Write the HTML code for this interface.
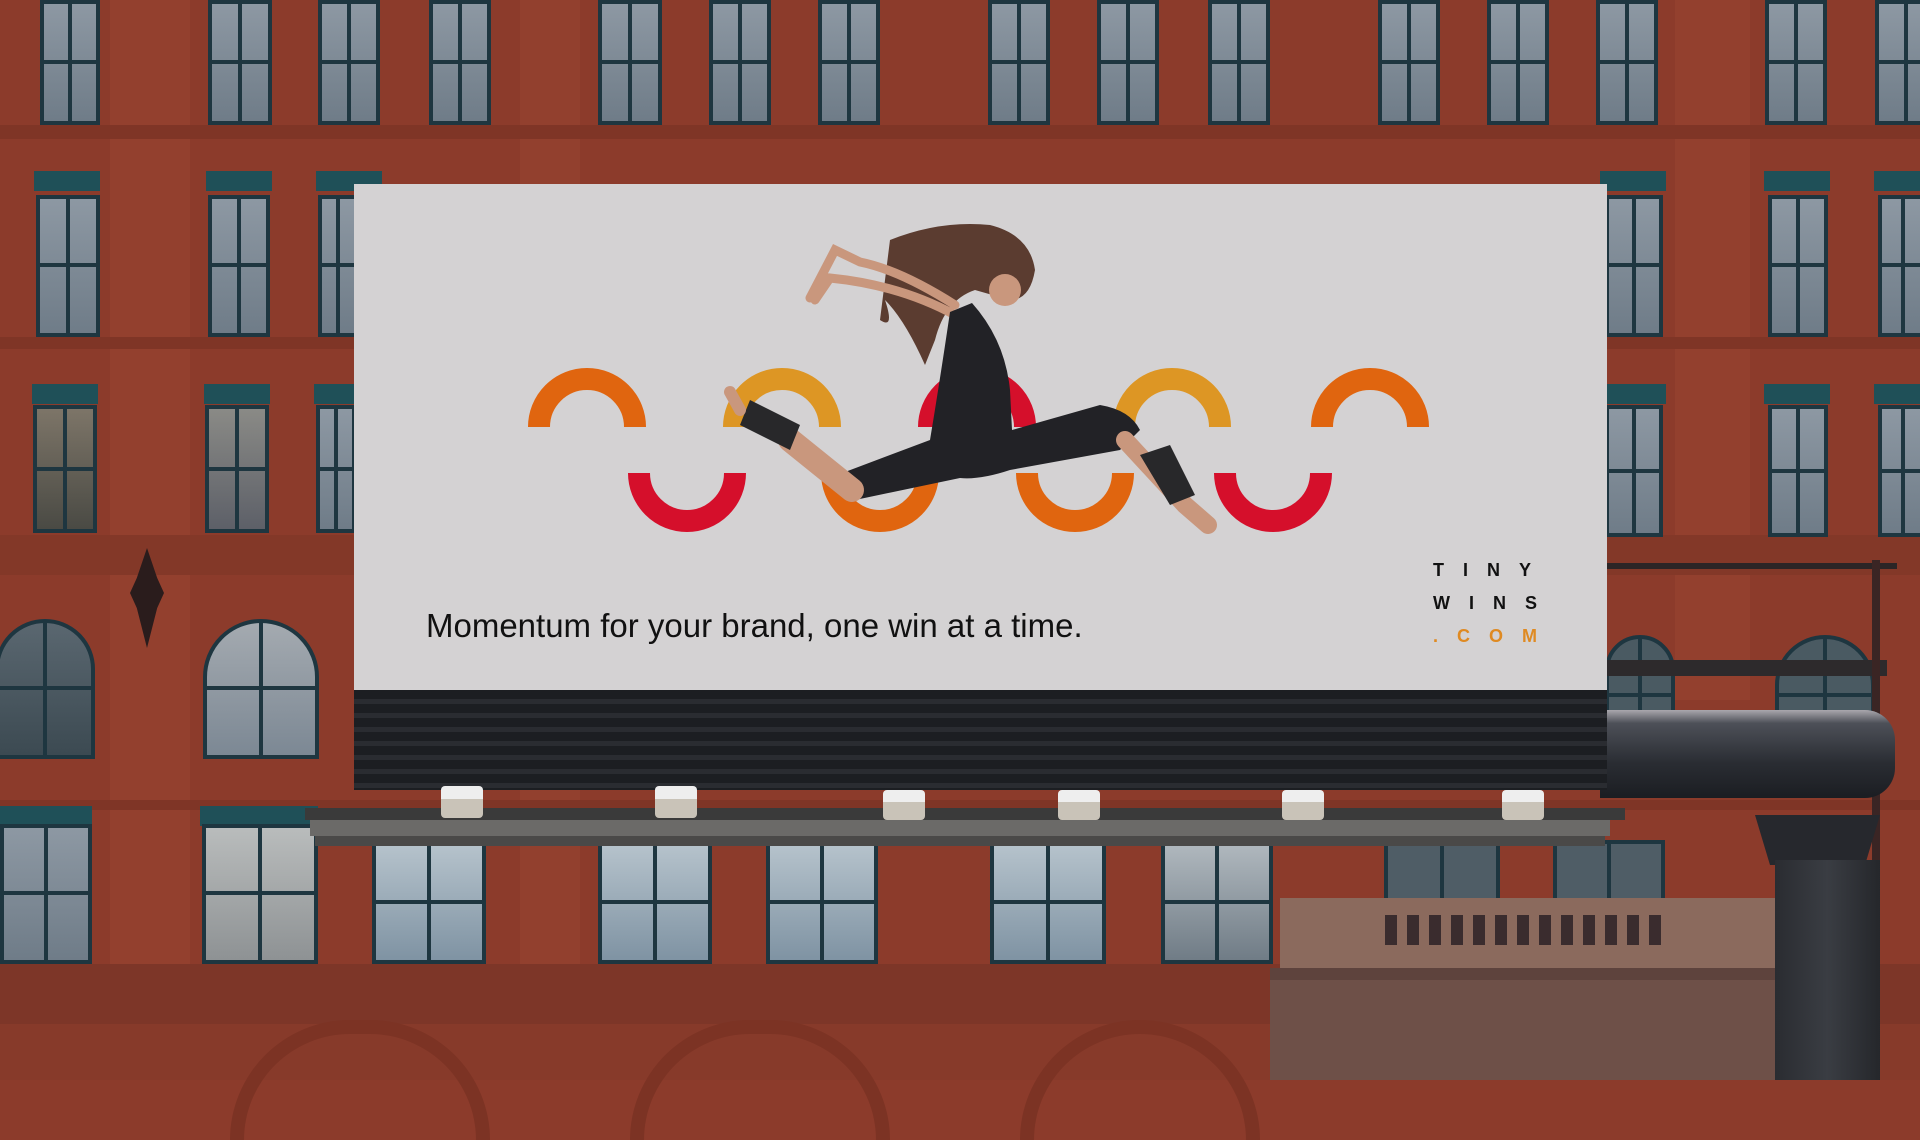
<!DOCTYPE html>
<html><head><meta charset="utf-8"><style>
*{margin:0;padding:0;box-sizing:border-box}
body{width:1920px;height:1080px;overflow:hidden;position:relative;background:#8c3b2b;font-family:"Liberation Sans",sans-serif}
.a{position:absolute}
.w{position:absolute;background:linear-gradient(180deg,#8d98a3,#6f7c88);border:4px solid #1e3640;}
.w:before{content:"";position:absolute;left:50%;top:0;bottom:0;width:4px;margin-left:-2px;background:#1e3640}
.w:after{content:"";position:absolute;left:0;right:0;top:48%;height:4px;background:#1e3640}
.l{position:absolute;background:#1f5058;height:20px}
.pier{position:absolute;background:#95412f}
</style></head><body>
<div class="pier" style="left:110px;top:0;width:80px;height:1080px;background:#93402e"></div>
<div class="pier" style="left:520px;top:0;width:60px;height:1080px;background:#92402e"></div>
<div class="pier" style="left:1675px;top:0;width:75px;height:700px;background:#93402e"></div>
<div class="a" style="left:0;top:125px;width:1920px;height:14px;background:#7f3526"></div>
<div class="a" style="left:0;top:337px;width:1920px;height:12px;background:#7f3526"></div>
<div class="a" style="left:0;top:535px;width:1920px;height:40px;background:#833828"></div>
<div class="a" style="left:0;top:800px;width:1920px;height:10px;background:#7f3526"></div>
<div class="a" style="left:0;top:964px;width:1920px;height:60px;background:#7d3628"></div>
<div class="a" style="left:0;top:1024px;width:1920px;height:56px;background:#873a2a"></div>

<div class="w" style="left:40px;top:0;width:60px;height:125px"></div>
<div class="w" style="left:208px;top:0;width:64px;height:125px"></div>
<div class="w" style="left:318px;top:0;width:62px;height:125px"></div>
<div class="w" style="left:429px;top:0;width:62px;height:125px"></div>
<div class="w" style="left:598px;top:0;width:64px;height:125px"></div>
<div class="w" style="left:709px;top:0;width:62px;height:125px"></div>
<div class="w" style="left:818px;top:0;width:62px;height:125px"></div>
<div class="w" style="left:988px;top:0;width:62px;height:125px"></div>
<div class="w" style="left:1097px;top:0;width:62px;height:125px"></div>
<div class="w" style="left:1208px;top:0;width:62px;height:125px"></div>
<div class="w" style="left:1378px;top:0;width:62px;height:125px"></div>
<div class="w" style="left:1487px;top:0;width:62px;height:125px"></div>
<div class="w" style="left:1596px;top:0;width:62px;height:125px"></div>
<div class="w" style="left:1765px;top:0;width:62px;height:125px"></div>
<div class="w" style="left:1875px;top:0;width:62px;height:125px"></div>
<div class="l" style="left:34px;top:171px;width:66px"></div><div class="w" style="left:36px;top:195px;width:64px;height:142px"></div>
<div class="l" style="left:206px;top:171px;width:66px"></div><div class="w" style="left:208px;top:195px;width:62px;height:142px"></div>
<div class="l" style="left:316px;top:171px;width:66px"></div><div class="w" style="left:318px;top:195px;width:40px;height:142px"></div>
<div class="l" style="left:32px;top:384px;width:66px"></div><div class="w" style="left:33px;top:405px;width:64px;height:128px;background:linear-gradient(#7d7568,#4a4a44)"></div>
<div class="l" style="left:204px;top:384px;width:66px"></div><div class="w" style="left:205px;top:405px;width:64px;height:128px;background:linear-gradient(#8a8a86,#5d6068)"></div>
<div class="l" style="left:314px;top:384px;width:40px"></div><div class="w" style="left:316px;top:405px;width:40px;height:128px"></div>
<div class="l" style="left:1600px;top:171px;width:66px"></div><div class="w" style="left:1605px;top:195px;width:58px;height:142px"></div>
<div class="l" style="left:1764px;top:171px;width:66px"></div><div class="w" style="left:1768px;top:195px;width:60px;height:142px"></div>
<div class="l" style="left:1874px;top:171px;width:50px"></div><div class="w" style="left:1878px;top:195px;width:50px;height:142px"></div>
<div class="l" style="left:1600px;top:384px;width:66px"></div><div class="w" style="left:1605px;top:405px;width:58px;height:132px"></div>
<div class="l" style="left:1764px;top:384px;width:66px"></div><div class="w" style="left:1768px;top:405px;width:60px;height:132px"></div>
<div class="l" style="left:1874px;top:384px;width:50px"></div><div class="w" style="left:1878px;top:405px;width:50px;height:132px"></div>
<div class="w" style="left:-5px;top:619px;width:100px;height:140px;border-radius:50px 50px 0 0;background:linear-gradient(#5a6770,#3c4a52)"></div>
<div class="w" style="left:203px;top:619px;width:116px;height:140px;border-radius:58px 58px 0 0;background:linear-gradient(#a4aab0,#7c8894)"></div>
<div class="w" style="left:1605px;top:635px;width:70px;height:120px;border-radius:50px 50px 0 0;background:#4a5a62"></div>
<div class="w" style="left:1775px;top:635px;width:100px;height:120px;border-radius:50px 50px 0 0;background:#4a5a62"></div>
<div class="a" style="left:130px;top:548px;width:34px;height:100px;background:#2a1c1c;clip-path:polygon(50% 0,80% 30%,100% 45%,80% 60%,50% 100%,20% 60%,0 45%,20% 30%)"></div>
<div class="l" style="left:0;top:806px;width:92px"></div><div class="w" style="left:0;top:824px;width:92px;height:140px"></div>
<div class="l" style="left:200px;top:806px;width:118px"></div><div class="w" style="left:202px;top:824px;width:116px;height:140px;background:linear-gradient(#b9bcbc,#8e9294)"></div>
<div class="w" style="left:372px;top:840px;width:114px;height:124px;background:linear-gradient(#b6c3cc,#7f93a3)"></div>
<div class="w" style="left:598px;top:840px;width:114px;height:124px;background:linear-gradient(#b6c3cc,#7f93a3)"></div>
<div class="w" style="left:766px;top:840px;width:112px;height:124px;background:linear-gradient(#b6c3cc,#7f93a3)"></div>
<div class="w" style="left:990px;top:840px;width:116px;height:124px;background:linear-gradient(#b6c3cc,#7f93a3)"></div>
<div class="w" style="left:1161px;top:840px;width:112px;height:124px;background:linear-gradient(#b0b8be,#707c86)"></div>
<div class="w" style="left:1384px;top:840px;width:116px;height:124px;background:#4f5d66"></div>
<div class="w" style="left:1553px;top:840px;width:112px;height:124px;background:#4f5d66"></div>
<div class="a" style="left:230px;top:1020px;width:260px;height:120px;border-radius:130px 130px 0 0;border:14px solid #7c3324;border-bottom:0"></div>
<div class="a" style="left:630px;top:1020px;width:260px;height:120px;border-radius:130px 130px 0 0;border:14px solid #7c3324;border-bottom:0"></div>
<div class="a" style="left:1020px;top:1020px;width:240px;height:120px;border-radius:120px 120px 0 0;border:14px solid #7c3324;border-bottom:0"></div>
<div class="a" style="left:1280px;top:898px;width:495px;height:70px;background:#8b6a5d"></div>
<div class="a" style="left:1385px;top:915px;width:280px;height:30px;background:repeating-linear-gradient(90deg,#3a2c2e 0 12px,#8b6a5d 12px 22px)"></div>
<div class="a" style="left:1270px;top:968px;width:505px;height:112px;background:#6e5048"></div>
<div class="a" style="left:1270px;top:968px;width:505px;height:12px;background:#5e433d"></div>
<div class="a" style="left:1607px;top:563px;width:290px;height:6px;background:#2b2526"></div>
<div class="a" style="left:1607px;top:660px;width:280px;height:16px;background:#2d2a2c"></div>
<div class="a" style="left:1872px;top:560px;width:8px;height:520px;background:#3a2524"></div>
<div class="a" style="left:1600px;top:710px;width:295px;height:88px;border-radius:0 30px 30px 0;background:linear-gradient(#a9a7ad 0,#4d5058 15%,#2a2d33 60%,#1b1d22)"></div>
<div class="a" style="left:1755px;top:815px;width:125px;height:50px;background:#26282d;clip-path:polygon(0 0,100% 0,88% 100%,12% 100%)"></div>
<div class="a" style="left:1775px;top:860px;width:105px;height:220px;background:linear-gradient(90deg,#2a2c31,#3a3d43,#25272b)"></div>

<div class="a" style="left:354px;top:184px;width:1253px;height:506px;background:#d4d2d3"></div>
<div class="a" style="left:354px;top:690px;width:1253px;height:100px;background:repeating-linear-gradient(180deg,#1c1e22 0 9px,#2a2c31 9px 14px)"></div>
<div class="a" style="left:305px;top:808px;width:1320px;height:12px;background:#3a3a3a"></div>
<div class="a" style="left:310px;top:820px;width:1300px;height:16px;background:#6b6a68"></div>
<div class="a" style="left:315px;top:836px;width:1290px;height:10px;background:#4a4948"></div>
<div class="a" style="left:441px;top:786px;width:42px;height:32px;background:linear-gradient(#eeeeee 0 40%,#c9c3b8 40%);border-radius:4px"></div>
<div class="a" style="left:655px;top:786px;width:42px;height:32px;background:linear-gradient(#eeeeee 0 40%,#c9c3b8 40%);border-radius:4px"></div>
<div class="a" style="left:883px;top:790px;width:42px;height:30px;background:linear-gradient(#eeeeee 0 40%,#c9c3b8 40%);border-radius:4px"></div>
<div class="a" style="left:1058px;top:790px;width:42px;height:30px;background:linear-gradient(#eeeeee 0 40%,#c9c3b8 40%);border-radius:4px"></div>
<div class="a" style="left:1282px;top:790px;width:42px;height:30px;background:linear-gradient(#eeeeee 0 40%,#c9c3b8 40%);border-radius:4px"></div>
<div class="a" style="left:1502px;top:790px;width:42px;height:30px;background:linear-gradient(#eeeeee 0 40%,#c9c3b8 40%);border-radius:4px"></div>

<svg class="a" style="left:0;top:0" width="1920" height="1080">
<g fill="none" stroke-width="22">
<path d="M539 427 A48 48 0 0 1 635 427" stroke="#e0650f"/>
<path d="M734 427 A48 48 0 0 1 830 427" stroke="#dd9624"/>
<path d="M929 427 A48 48 0 0 1 1025 427" stroke="#d50f2b"/>
<path d="M1124 427 A48 48 0 0 1 1220 427" stroke="#dd9624"/>
<path d="M1322 427 A48 48 0 0 1 1418 427" stroke="#e0650f"/>
<path d="M639 473 A48 48 0 0 0 735 473" stroke="#d50f2b"/>
<path d="M832 473 A48 48 0 0 0 928 473" stroke="#e0650f"/>
<path d="M1027 473 A48 48 0 0 0 1123 473" stroke="#e0650f"/>
<path d="M1225 473 A48 48 0 0 0 1321 473" stroke="#d50f2b"/>
</g>
<path d="M890 240 Q940 220 990 225 Q1030 235 1035 270 Q1030 300 1010 300 L975 290 Q945 300 935 340 L925 365 Q905 320 885 300 Q895 330 880 320 Z" fill="#5b3c30"/>
<path d="M955 305 Q900 270 860 262 L835 250 L810 298 M955 315 Q900 285 830 278 L815 300" stroke="#c9977d" stroke-width="9" fill="none" stroke-linecap="round"/>
<circle cx="1005" cy="290" r="16" fill="#c9977d"/>
<path d="M950 312 L972 303 Q1005 340 1010 390 L1012 430 L1100 405 Q1130 410 1140 430 L1120 450 L1010 470 Q980 480 960 478 L855 500 L845 472 L930 440 Q940 380 950 312 Z" fill="#222226"/>
<path d="M852 490 L790 440" stroke="#c9977d" stroke-width="24" stroke-linecap="round"/>
<path d="M1125 440 L1185 505 L1208 525" stroke="#c9977d" stroke-width="18" stroke-linecap="round"/>
<path d="M750 400 L800 425 L790 450 L740 425 Z" fill="#28282a"/>
<path d="M1140 455 L1170 445 L1195 495 L1170 505 Z" fill="#28282a"/>
<path d="M740 410 L730 392" stroke="#c9977d" stroke-width="12" stroke-linecap="round"/>
</svg>

<div class="a" style="left:426px;top:607px;font-size:33px;color:#111;white-space:nowrap">Momentum for your brand, one win at a time.</div>
<div class="a" style="left:1433px;top:554px;font-size:18px;font-weight:bold;color:#111;letter-spacing:19px;line-height:33px">TINY<br>WINS<br><span style="color:#df8a22">.COM</span></div>
</body></html>
